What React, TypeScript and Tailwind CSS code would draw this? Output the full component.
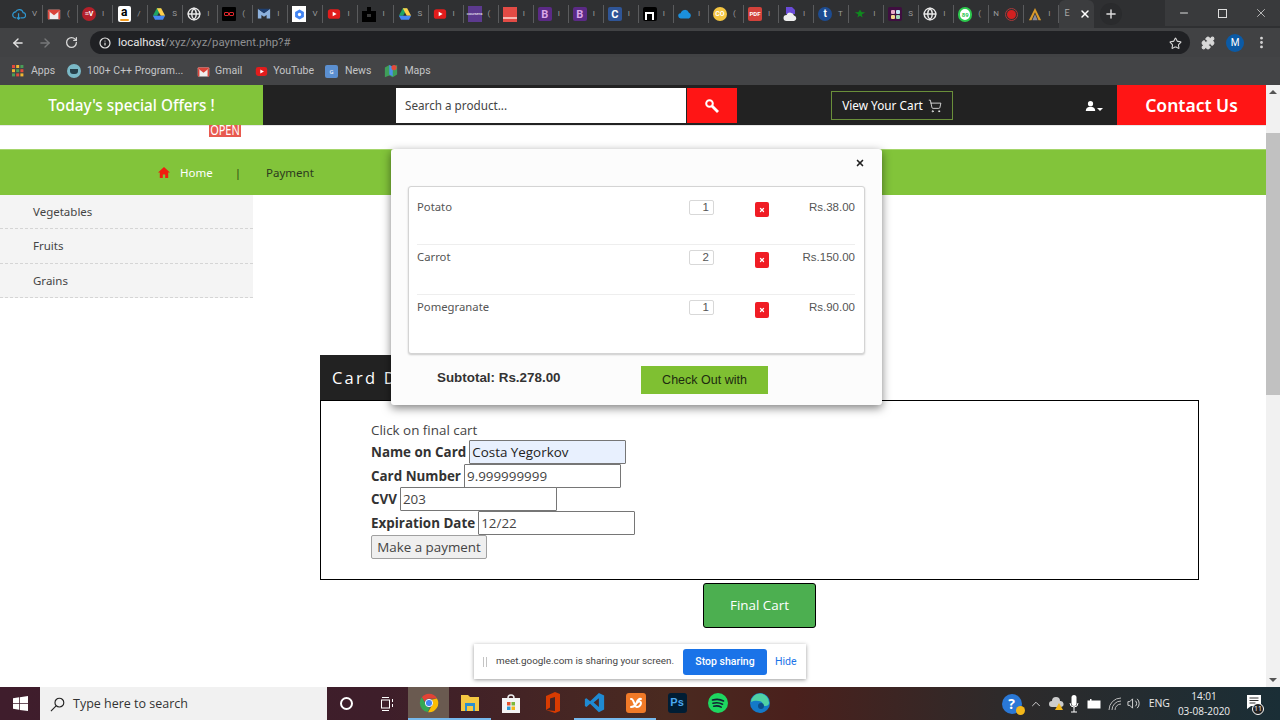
import React from "react";
import { ArrowLeft, ArrowRight, RotateCw, Info, Star, Puzzle, MoreVertical, Minus, X, Plus, ShoppingCart, Globe, ChevronUp } from "lucide-react";

const Gmail = ({ s = 14 }: { s?: number }) => (
  <svg width={s} height={s} viewBox="0 0 16 16"><rect x="1" y="3" width="14" height="11" rx="1" fill="#eee" /><path d="M1 4l7 5.5L15 4v-1H1z" fill="#d9443a" /><path d="M1 4v10h2V6zM15 4v10h-2V6z" fill="#d9443a" /></svg>
);
const Yt = ({ s = 14 }: { s?: number }) => (
  <svg width={s} height={s} viewBox="0 0 16 16"><rect x="1" y="2.5" width="14" height="11" rx="3" fill="#e21c1c" /><path d="M6.5 5.5v5L11 8z" fill="#fff" /></svg>
);
const Drive = () => (
  <svg width="14" height="14" viewBox="0 0 16 16"><path d="M5.5 1.5h5L6 10H1z" fill="#1fa463" /><path d="M10.5 1.5L15 10h-5L5.5 1.5z" fill="#ffd04b" /><path d="M1 10h14l-2.5 4.5h-9z" fill="#4687f4" /></svg>
);
const Tile = ({ bg, fg = "#fff", t, size = "text-[9px]", r = "rounded-[2px]" }: { bg: string; fg?: string; t: string; size?: string; r?: string }) => (
  <span className={`flex h-[14px] w-[14px] items-center justify-center font-bold leading-none ${size} ${r}`} style={{ background: bg, color: fg }}>{t}</span>
);

const tabs: { icon: React.ReactNode; l: string }[] = [
  { l: "V", icon: <svg width="15" height="14" viewBox="0 0 16 16" fill="none" stroke="#2f96cf" strokeWidth="1.4"><path d="M4.5 12.5a3.5 3.5 0 0 1-.3-7A4.5 4.5 0 0 1 12.7 6.5a3 3 0 0 1-.4 6H10" /><path d="M7.5 7v7M5.5 12l2 2 2-2" /></svg> },
  { l: "(", icon: <Gmail /> },
  { l: "I", icon: <Tile bg="#b3202a" t="≡V" size="text-[7px]" r="rounded-full" /> },
  { l: "/", icon: <span className="relative flex h-[16px] w-[13px] items-start justify-center rounded-[2px] bg-white text-[12px] font-bold leading-[13px] text-black">a<span className="absolute bottom-[1px] left-[2px] h-[2px] w-[9px] rounded-full bg-[#f29a1f]" /></span> },
  { l: "S", icon: <Drive /> },
  { l: "I", icon: <Globe size={14} color="#e8e8e8" strokeWidth={2.4} /> },
  { l: "(", icon: <span className="flex h-[14px] w-[14px] items-center justify-center rounded-[1px] bg-black"><span className="h-[4px] w-[5px] rounded-[1px] border border-[#e0262c]" /><span className="h-[4px] w-[5px] rounded-[1px] border border-[#e0262c]" /></span> },
  { l: "I", icon: <svg width="15" height="14" viewBox="0 0 16 16"><path d="M1 2l7 5 7-5v11h-4V9L8 11 5 9v4H1z" fill="#8db1dc" /><path d="M1 2l7 5 7-5z" fill="#1e3f70" /></svg> },
  { l: "V", icon: <span className="flex h-[16px] w-[14px] items-center justify-center bg-white"><svg width="11" height="11" viewBox="0 0 12 12"><path d="M6 .5l4.8 2.7v5.6L6 11.5 1.2 8.800V3.200z" fill="#4285f4" /><circle cx="6" cy="6" r="1.8" fill="#fff" /></svg></span> },
  { l: "I", icon: <Yt /> },
  { l: "I", icon: <svg width="14" height="16" viewBox="0 0 14 16"><rect y="5" width="14" height="11" fill="#000" /><rect x="5" y="1" width="4" height="4" fill="#000" /><rect x="5" y="8" width="4" height="3" fill="#3a3a3a" /></svg> },
  { l: "S", icon: <Drive /> },
  { l: "I", icon: <Yt /> },
  { l: "(", icon: <span className="flex h-[16px] w-[14px] items-center justify-center bg-[#5c3a8e] text-[4px] leading-none text-white">coursera</span> },
  { l: "I", icon: <span className="flex h-[15px] w-[14px] flex-col bg-[#e24b45]"><span className="mt-[10px] h-[2px] bg-[#f7b6b0]" /></span> },
  { l: "I", icon: <Tile bg="#5b2a86" fg="#d9a6e8" t="B" size="text-[11px]" /> },
  { l: "I", icon: <Tile bg="#5b2a86" fg="#d9a6e8" t="B" size="text-[11px]" /> },
  { l: "I", icon: <Tile bg="#2f5597" t="C" size="text-[11px]" /> },
  { l: "I", icon: <span className="flex h-[14px] w-[14px] items-end justify-center rounded-[2px] bg-black pb-[1px]"><span className="h-[8px] w-[9px] border-[2px] border-b-0 border-white" /></span> },
  { l: "I", icon: <svg width="15" height="12" viewBox="0 0 16 12"><path d="M3.500 11a3 3 0 0 1-.5-6 5 5 0 0 1 9.500-.5A3.500 3.500 0 0 1 12.500 11z" fill="#1b90dd" /></svg> },
  { l: "(", icon: <Tile bg="#f4c542" fg="#fff" t="CO" size="text-[7px]" r="rounded-full" /> },
  { l: "I", icon: <Tile bg="#d2423b" t="PDF" size="text-[6px]" /> },
  { l: "I", icon: <svg width="14" height="16" viewBox="0 0 14 16"><path d="M3 1h6l3 3v4H3z" fill="#6a4bd8" /><path d="M3.500 15a3 3 0 0 1 0-6 4 4 0 0 1 7.500.5A2.800 2.800 0 0 1 11 15z" fill="#eee" /></svg> },
  { l: "T", icon: <Tile bg="#1d4c92" t="t" size="text-[10px]" r="rounded-full" /> },
  { l: "I", icon: <svg width="14" height="14" viewBox="0 0 16 16"><path d="M8 3l2 3h4l-4 2.500 1 3.500-3-2-3 2 1-3.500L2 6h4z" fill="#0f8a1e" /></svg> },
  { l: "S", icon: <span className="grid h-[14px] w-[14px] grid-cols-2 place-items-center rounded-[2px] bg-[#3f0e40] p-[2px]"><span className="h-[4px] w-[4px] rounded-[1px] bg-[#e8a9c8]" /><span className="h-[4px] w-[4px] rounded-[1px] bg-[#bde3f3]" /><span className="h-[4px] w-[4px] rounded-[1px] bg-[#f5d78e]" /><span className="h-[4px] w-[4px] rounded-[1px] bg-[#9fd9b8]" /></span> },
  { l: "I", icon: <Globe size={14} color="#e8e8e8" strokeWidth={2.4} /> },
  { l: "(", icon: <span className="flex h-[15px] w-[15px] items-center justify-center rounded-full border-[2px] border-[#2cc84d] bg-white text-[6px] font-bold text-[#2cc84d]">89</span> },
  { l: "N", icon: <span className="h-[14px] w-[14px]" /> },
  { l: "I", icon: <svg width="15" height="14" viewBox="0 0 16 16"><path d="M8 1L1 15h3L8 6l4 9h3z" fill="#d99a2b" /><path d="M5 15L8 8l3 7z" fill="#8a8a9a" /></svg> },
];

const Ubuntu = "font-['Noto_Sans','Open_Sans',sans-serif]";

function ChromeUI() {
  return (
    <div className="font-['Roboto','Liberation_Sans',sans-serif]">
      <div className="flex h-[28px] items-center bg-[#2f3032] pl-2">
        {tabs.map((t, i) => (
          <div key={i} className="relative flex h-[18px] w-[35.05px] shrink-0 items-center border-r border-[#5a5b5d] pl-[4px]">
            <span className="flex w-[14px] items-center justify-center">{t.icon}</span>
            {t.l === "N" ? (
              <>
                <span className="absolute left-[18px] h-[9px] w-[9px] rounded-full bg-[#d32020] outline outline-1 outline-offset-1 outline-[#a83a3a]" />
                <span className="absolute left-[4px] text-[8px] text-[#9a9b9d]">N</span>
              </>
            ) : (
              <span className="ml-[6px] text-[8px] text-[#9a9b9d]">{t.l}</span>
            )}
          </div>
        ))}
        <div className="flex h-full w-[35px] shrink-0 items-center rounded-t-[6px] bg-[#3c3d3f] pl-[5px]">
          <span className="text-[9px] text-[#aaa]">E</span>
          <X size={12} color="#fff" strokeWidth={3} className="ml-[9px]" />
        </div>
        <div className="ml-[6px] flex h-[22px] w-[22px] shrink-0 items-center justify-center rounded-full bg-[#2a2b2d]"><Plus size={14} color="#ddd" strokeWidth={2.5} /></div>
        <div className="ml-auto flex h-[26px] w-[115px] shrink-0 items-start self-start bg-[#393a3c]">
          <div className="flex h-full w-[38px] items-center justify-center"><Minus size={12} color="#ddd" /></div>
          <div className="flex h-full w-[38px] items-center justify-center"><span className="relative block h-[9px] w-[9px] border border-[#ddd]" /></div>
          <div className="flex h-full w-[39px] items-center justify-center"><X size={14} color="#ddd" strokeWidth={1.3} /></div>
        </div>
      </div>
      <div className="flex h-[29px] items-center bg-[#414244]">
        <div className="flex w-[90px] items-center pl-[11px]">
          <ArrowLeft size={14} color="#e4e4e4" strokeWidth={2.4} />
          <ArrowRight size={14} color="#77787a" strokeWidth={2.4} className="ml-[13px]" />
          <RotateCw size={13} color="#d8d8d8" strokeWidth={2.4} className="ml-[13px]" />
        </div>
        <div className="flex h-[23px] w-[1100px] items-center rounded-full bg-[#202124] pl-[9px] pt-[1px] text-[11.4px]">
          <Info size={12} color="#e4e4e4" strokeWidth={2.4} />
          <span className="ml-[7px] text-[#e8e8e8]">localhost</span>
          <span className="text-[#8e8f91]">/xyz/xyz/payment.php?#</span>
          <Star size={13} color="#d8d8d8" strokeWidth={2} className="ml-auto mr-[8px]" />
        </div>
        <Puzzle size={14} color="#d8d8d8" fill="#d8d8d8" className="ml-[11px]" />
        <div className="ml-[11px] flex h-[18px] w-[18px] items-center justify-center rounded-full bg-[#0b5aa5] text-[10px] text-white">M</div>
        <MoreVertical size={15} color="#d8d8d8" strokeWidth={2.5} className="ml-[10px]" />
      </div>
      <div className="flex h-[28px] items-center bg-[#434446] pl-[12px] text-[10.5px] text-[#c4c4c6]">
        <svg width="12" height="12" viewBox="0 0 12 12">
          {[0, 1, 2].map((r) => [0, 1, 2].map((c) => <rect key={`${r}${c}`} x={c * 4.2} y={r * 4.2} width="3" height="3" fill={["#e34a3c", "#f2b632", "#4a9d57"][(r + c) % 3]} />))}
        </svg>
        <span className="ml-[7px]">Apps</span>
        <span className="ml-[12px] flex h-[14px] w-[14px] items-center justify-center rounded-full bg-[#7ab8c6]"><span className="h-[5px] w-[8px] rounded-b-[3px] bg-[#26404a]" /></span>
        <span className="ml-[6px] w-[110px]">100+ C++ Program...</span>
        <Gmail s={13} />
        <span className="ml-[5px]">Gmail</span>
        <span className="ml-[13px] flex"><Yt s={13} /></span>
        <span className="ml-[5px]">YouTube</span>
        <span className="ml-[11px] flex h-[13px] w-[13px] items-center justify-center rounded-[2px] bg-[#5b8fd0] text-[6px] text-white">G</span>
        <span className="ml-[7px]">News</span>
        <svg className="ml-[13px]" width="14" height="14" viewBox="0 0 16 16"><path d="M1 4l5-3 4 2 5-2v11l-5 3-4-2-5 2z" fill="#3f9e59" /><path d="M6 1l4 2v11l-4-2z" fill="#4a8fe8" /><circle cx="11.500" cy="4" r="3" fill="#e34a3c" /></svg>
        <span className="ml-[6px]">Maps</span>
      </div>
    </div>
  );
}

function Page() {
  return (
    <div className={`relative h-[602px] w-[1266px] overflow-hidden bg-white ${Ubuntu}`}>
      <header className="flex h-[40px] items-stretch bg-[#222222]">
        <div className="flex w-[263px] items-center justify-center bg-[#82c43a] pt-[1px] text-[15.3px] font-medium text-white">Today's special Offers !</div>
        <div className="ml-[133px] mt-[3px] flex h-[35px] w-[290px] items-center bg-white pl-[9px] text-[11.7px] text-[#444]">Search a product...</div>
        <div className="ml-[1px] mt-[3px] flex h-[35px] w-[50px] items-center justify-center bg-[#ff1515]">
          <svg width="16" height="16" viewBox="0 0 16 16" fill="none" stroke="#fff" strokeWidth="2"><circle cx="5.500" cy="5.500" r="3.300" /><path d="M8 8l6 6" strokeWidth="2.800" /></svg>
        </div>
        <div className="ml-[94px] mt-[6px] flex h-[29px] w-[122px] items-center justify-center gap-[5px] border border-[#6a8f3a] text-[11.8px] text-white">
          View Your Cart <ShoppingCart size={14} color="#fff" strokeWidth={1.3} />
        </div>
        <div className="ml-[132px] mt-[14px] flex h-[13px] items-end">
          <svg width="11" height="12" viewBox="0 0 14 13" fill="#fff"><circle cx="7" cy="3.500" r="3.300" /><path d="M1 13c0-4 2.500-5.500 6-5.500s6 1.500 6 5.500z" /></svg>
          <span className="mb-[1px] ml-[1px] h-0 w-0 border-x-[3px] border-t-[3px] border-x-transparent border-t-white" />
        </div>
        <div className="ml-auto flex w-[149px] items-center justify-center bg-[#ff1515] text-[17.5px] font-semibold text-white">Contact Us</div>
      </header>
      <div className="relative h-[24px] border-t border-[#e8e8e8]">
        <span className="absolute left-[209px] top-[-1px] flex h-[12px] w-[32px] items-end justify-center overflow-hidden bg-[#e85a4f] pb-[1px] text-[11px] leading-[11px] text-white"><span className="block origin-bottom scale-y-[1.3]">OPEN</span></span>
      </div>
      <nav className="flex h-[46px] items-center border-t border-[#a5d56b] bg-[#82c43a] pl-[158px] text-[11.5px]">
        <svg width="12" height="11" viewBox="0 0 12 11"><path d="M6 0L0 5.500h1.800V11h3V7.500h2.400V11h3V5.500H12z" fill="#f01c10" /></svg>
        <span className="ml-[10px] text-white">Home</span>
        <span className="ml-[22px] text-[#2f4a12]">|</span>
        <span className="ml-[25px] text-[#2c3a1e]">Payment</span>
      </nav>
      <div className="flex items-start">
        <aside className="w-[253px] bg-[#f4f4f4] text-[11.5px] text-[#444]">
          {["Vegetables", "Fruits", "Grains"].map((n) => (
            <div key={n} className="flex h-[34.3px] items-center border-b border-dashed border-[#d5d5d5] pl-[33px]">{n}</div>
          ))}
        </aside>
        <main className="ml-[67px] mt-[160px] flex-1 font-['Open_Sans',sans-serif]">
          <div className="flex h-[45px] w-[200px] items-center bg-[#222222] pl-[12px] pt-[1px] text-[16.5px] tracking-[2.2px] text-white">Card Details</div>
          <div className="flex h-[180px] w-[879px] flex-col items-start border border-black pl-[50px] pt-[20px] text-[13.4px] leading-[18px] text-[#444]">
            <div className="mb-[1px]">Click on final cart</div>
            <div className="flex h-[24px] items-center"><b className="mr-[3px] font-bold text-[#333]">Name on Card</b><span className="flex h-[24px] w-[157px] items-center rounded-[1px] border border-[#767676] bg-[#e8f0fe] pl-[2px] text-[#222]">Costa Yegorkov</span></div>
            <div className="flex h-[23px] items-center"><b className="mr-[3px] font-bold text-[#333]">Card Number</b><span className="flex h-[24px] w-[157px] items-center rounded-[1px] border border-[#767676] bg-white pl-[2px]">9.999999999</span></div>
            <div className="flex h-[24px] items-center"><b className="mr-[3px] font-bold text-[#333]">CVV</b><span className="flex h-[24px] w-[157px] items-center rounded-[1px] border border-[#767676] bg-white pl-[2px]">203</span></div>
            <div className="flex h-[24px] items-center"><b className="mr-[3px] font-bold text-[#333]">Expiration Date</b><span className="flex h-[24px] w-[157px] items-center rounded-[1px] border border-[#767676] bg-white pl-[2px]">12/22</span></div>
            <div className="flex h-[24px] w-[116px] items-center justify-center rounded-[2px] border border-[#a0a0a0] bg-[#efefef] pb-[1px]">Make a payment</div>
          </div>
          <div className="ml-[383px] mt-[3px] flex h-[45px] w-[113px] items-center justify-center rounded-[3px] border border-black bg-[#4caf50] text-[13.4px] text-white">Final Cart</div>
        </main>
      </div>

      <div className="absolute left-[391px] top-[64px] h-[256px] w-[491px] rounded-[3px] bg-[#fcfcfc] shadow-[0_3px_10px_rgba(0,0,0,0.5)]">
        <X size={10} strokeWidth={4} color="#222" className="absolute right-[17px] top-[9px]" />
        <div className="absolute left-[17px] top-[37px] h-[168px] w-[457px] rounded-[3px] border border-[#d4d4d4] bg-white pl-[8px] pr-[9px] text-[11.3px] text-[#555] shadow-[0_1px_2px_rgba(0,0,0,0.2)]">
          {[["Potato", "1", "Rs.38.00", "h-[58px] pt-[12px]", "mt-[3px] h-[15px]"], ["Carrot", "2", "Rs.150.00", "h-[50px] pt-[4px]", "mt-[3px] h-[16px]"], ["Pomegranate", "1", "Rs.90.00", "h-[50px] pt-[4px]", "mt-[3px] h-[16px]"]].map(([n, q, p, c, r], i) => (
            <div key={n} className={`flex items-start ${c} ${i < 2 ? "border-b border-[#eeeeee]" : ""}`}>
              <span className="w-[272px]">{n}</span>
              <span className="mt-[1px] flex h-[15px] w-[25px] items-center justify-end rounded-[2px] border border-[#d8d8d8] pr-[4px] font-['Liberation_Sans',sans-serif] text-[11.5px]">{q}</span>
              <span className={`ml-[41px] flex w-[14px] items-center justify-center rounded-[2px] bg-[#f01c24] ${r}`}><X size={6} color="#fff" strokeWidth={5} /></span>
              <span className="ml-auto font-['Liberation_Sans',sans-serif] text-[11.5px]">{p}</span>
            </div>
          ))}
        </div>
        <div className="absolute left-[46px] top-[219px] font-['Liberation_Sans',sans-serif] text-[13.4px] font-bold text-[#333]">Subtotal: Rs.278.00</div>
        <div className="absolute left-[250px] top-[217px] flex h-[28px] w-[127px] items-center justify-center bg-[#7fc032] font-['Liberation_Sans',sans-serif] text-[12.5px] text-[#1d2b10]">Check Out with</div>
      </div>

      <div className="absolute left-[474px] top-[559px] flex h-[35px] w-[332px] items-center whitespace-nowrap bg-white font-['Roboto',sans-serif] text-[#444] shadow-[0_1px_4px_rgba(0,0,0,0.4)]">
        <span className="ml-[9px] h-[10px] w-[4px] border-x border-[#c4c4c4]" />
        <span className="ml-[9px] w-[178px] text-[9.9px]">meet.google.com is sharing your screen.</span>
        <span className="ml-[9px] flex h-[26px] w-[84px] items-center justify-center rounded-[3px] bg-[#1a73e8] text-[10.5px] font-medium text-white">Stop sharing</span>
        <span className="ml-[8px] text-[10.5px] text-[#1a73e8]">Hide</span>
      </div>
    </div>
  );
}

function Scrollbar() {
  return (
    <div className="flex h-[602px] w-[14px] flex-col items-center bg-[#f1f1f1]">
      <span className="mt-[5px] h-0 w-0 border-x-[4px] border-b-[4px] border-x-transparent border-b-[#555]" />
      <span className="mt-[39px] h-[262px] w-full bg-[#c1c1c1]" />
      <span className="mb-[5px] mt-auto h-0 w-0 border-x-[4px] border-t-[4px] border-x-transparent border-t-[#555]" />
    </div>
  );
}

function Taskbar() {
  const apps: [React.ReactNode, boolean][] = [
    [<svg width="22" height="22" viewBox="0 0 24 24"><path d="M12 2a10 10 0 0 1 8.700 5H12a5 5 0 0 0-4.700 3.300L4.200 5.800A10 10 0 0 1 12 2z" fill="#e34235" /><path d="M2 12a10 10 0 0 1 2.200-6.200l4 7A5 5 0 0 0 13 17l-2.500 4.900A10 10 0 0 1 2 12z" fill="#34a853" /><path d="M20.700 7A10 10 0 0 1 11 22l4-7a5 5 0 0 0-.5-6.500z" fill="#fbbc05" /><circle cx="12" cy="12" r="4" fill="#4285f4" stroke="#fff" /></svg>, true],
    [<svg width="20" height="18" viewBox="0 0 20 18"><path d="M1 1h7l2 2h9v14H1z" fill="#f5c842" /><path d="M5 9h10v8h-2v-5H7v5H5z" fill="#2a8fd0" /></svg>, true],
    [<svg width="18" height="20" viewBox="0 0 18 20"><path d="M6 5a3 3 0 0 1 6 0" fill="none" stroke="#eee" strokeWidth="1.500" /><rect y="5" width="18" height="15" fill="#f4f4f4" /><rect x="5" y="9" width="3.500" height="3.500" fill="#e5512b" /><rect x="9.500" y="9" width="3.500" height="3.500" fill="#7cb83a" /><rect x="5" y="13.500" width="3.500" height="3.500" fill="#2a9ad6" /><rect x="9.500" y="13.500" width="3.500" height="3.500" fill="#f3b71a" /></svg>, false],
    [<svg width="16" height="21" viewBox="0 0 16 21"><path d="M1 4L10 0l5 2v17l-5 2-9-3 9 1V5L5 6.500v9l-4 2.500z" fill="#d83b01" /></svg>, false],
    [<svg width="21" height="21" viewBox="0 0 24 24"><path d="M17 1l6 3v16l-6 3L7 13.500 2.800 17 1 16V8l1.800-1L7 10.500zM17 7l-6 5 6 5z" fill="#1f8ad2" /></svg>, true],
    [<svg width="20" height="20" viewBox="0 0 20 20"><rect width="20" height="20" rx="3" fill="#f07a28" /><path d="M5 6c3-1 3 8 6 8s4-3 4-4-2-3-4 0M15 6c-3-1-4 3-5 5s-3 3-5 3" fill="none" stroke="#fff" strokeWidth="2" strokeLinecap="round" /></svg>, true],
    [<span className="flex h-[20px] w-[19px] items-center justify-center rounded-[3px] bg-[#001d34] font-['Liberation_Sans',sans-serif] text-[11px] font-bold text-[#4aa8f0]">Ps</span>, false],
    [<svg width="20" height="20" viewBox="0 0 20 20"><circle cx="10" cy="10" r="10" fill="#1ed760" /><path d="M4.500 7c4-1 8-.7 11 1M5 10.200c3.300-.8 6.700-.5 9.500 1M5.700 13.200c2.700-.6 5.300-.4 7.500.9" fill="none" stroke="#123" strokeWidth="1.600" strokeLinecap="round" /></svg>, false],
    [<svg width="20" height="20" viewBox="0 0 20 20"><circle cx="10" cy="10" r="10" fill="#1479c8" /><path d="M1 9a9 9 0 0 1 18 1c0 2-2 3.500-4.500 3-2-.5-2.500-2-2-3-1-2.500-8-3-11.500-1z" fill="#4fd1a5" /><circle cx="11" cy="13" r="3" fill="#0c4d8a" /></svg>, false],
  ];
  return (
    <div className="flex h-[33px] items-stretch bg-[linear-gradient(90deg,#3f1d2c_0%,#3e1e2a_30%,#4a2a20_52%,#4a201c_62%,#2e2a2a_78%,#1a2e36_100%)] font-['Open_Sans',sans-serif] text-white">
      <div className="flex w-[40px] items-center justify-center">
        <svg width="15" height="15" viewBox="0 0 16 16" fill="#fff"><path d="M0 2.300l6.500-.9v6.200H0zM7.300 1.300L16 0v7.600H7.300zM0 8.400h6.500v6.200L0 13.700zM7.300 8.400H16V16l-8.700-1.200z" /></svg>
      </div>
      <div className="flex w-[287px] items-center bg-[#f1f1f1] pl-[10px] pt-[1px] text-[12.5px] text-[#333]">
        <svg width="15" height="15" viewBox="0 0 16 16" fill="none" stroke="#222" strokeWidth="1.200"><circle cx="10" cy="6" r="4.700" /><path d="M6.500 9.500L1 15" /></svg>
        <span className="ml-[8px]">Type here to search</span>
      </div>
      <div className="flex w-[39px] items-center justify-center"><span className="h-[13px] w-[13px] rounded-full border-[2px] border-white" /></div>
      <div className="flex w-[42px] items-center justify-center">
        <svg width="14" height="14" viewBox="0 0 14 14" fill="none" stroke="#fff" strokeWidth="1"><path d="M2 .5h7M2 13.500h7" /><rect x="1.500" y="3" width="8" height="8" /><path d="M12.500 2v3M12.500 7v3" /></svg>
      </div>
      <div className="flex">
        {apps.map(([ic, on], i) => (
          <div key={i} className={`flex w-[41.4px] items-center justify-center border-b-[2px] ${on ? "border-[#76b9ed]" : "border-transparent"} ${i === 0 ? "bg-[#6a5a50]" : ""}`}>{ic}</div>
        ))}
      </div>
      <div className="ml-auto flex items-center">
        <span className="relative flex h-[20px] w-[20px] items-center justify-center rounded-full bg-[#2a78d6] text-[14px] font-bold leading-none">?<span className="absolute -bottom-[1px] -right-[3px] h-[9px] w-[9px] rounded-full bg-[#f3b71a]" /></span>
        <ChevronUp size={14} color="#fff" className="ml-[7px]" strokeWidth={1.3} />
        <svg className="ml-[6px]" width="16" height="14" viewBox="0 0 16 14"><path d="M3 10a3 3 0 0 1 0-6 4 4 0 0 1 8 0 3 3 0 0 1 1 6z" fill="#ccc" /><path d="M10 6l4 7H6z" fill="#f3b71a" /></svg>
        <svg className="ml-[4px]" width="10" height="18" viewBox="0 0 10 18"><rect x="2.500" y="0" width="5" height="11" rx="2.500" fill="#fff" /><path d="M5 12v5M2 17h6M1 8a4 4 0 0 0 8 0" stroke="#fff" fill="none" /></svg>
        <svg className="ml-[8px]" width="14" height="10" viewBox="0 0 14 10"><rect x="1" y="2" width="12" height="7" fill="#fff" stroke="#fff" /><rect x="3" y="0" width="1.500" height="2" fill="#fff" /></svg>
        <svg className="ml-[7px]" width="14" height="14" viewBox="0 0 14 14" fill="none" stroke="#bbb" strokeWidth="1"><path d="M1 13A12 12 0 0 1 13 1M4 13a9 9 0 0 1 9-9M7 13a6 6 0 0 1 6-6" /></svg>
        <svg className="ml-[5px]" width="13" height="13" viewBox="0 0 14 14" fill="none" stroke="#ddd" strokeWidth="1"><path d="M1 5h2l3-3v10L3 9H1zM9 4a4 4 0 0 1 0 6M11 2a7 7 0 0 1 0 10" /></svg>
        <span className="ml-[9px] text-[10.5px] text-[#e8e8e8]">ENG</span>
        <div className="ml-[5px] flex w-[58px] flex-col items-center text-[10px] leading-[15px] text-[#eee]">
          <span>14:01</span>
          <span>03-08-2020</span>
        </div>
        <div className="relative ml-[13px] mr-[16px] h-[20px] w-[18px]">
          <svg width="16" height="16" viewBox="0 0 16 16" fill="#fff"><path d="M1 1h14v11H5l-4 3z" /><path d="M3.500 4h9M3.500 6.500h9M3.500 9h6" stroke="#333" /></svg>
          <span className="absolute -bottom-[1px] right-0 flex h-[12px] w-[12px] items-center justify-center rounded-full border border-white bg-[#222] text-[7px] leading-none">11</span>
        </div>
      </div>
    </div>
  );
}

export default function App() {
  return (
    <div className="flex h-[720px] w-[1280px] flex-col overflow-hidden bg-white">
      <ChromeUI />
      <div className="flex">
        <Page />
        <Scrollbar />
      </div>
      <Taskbar />
    </div>
  );
}
